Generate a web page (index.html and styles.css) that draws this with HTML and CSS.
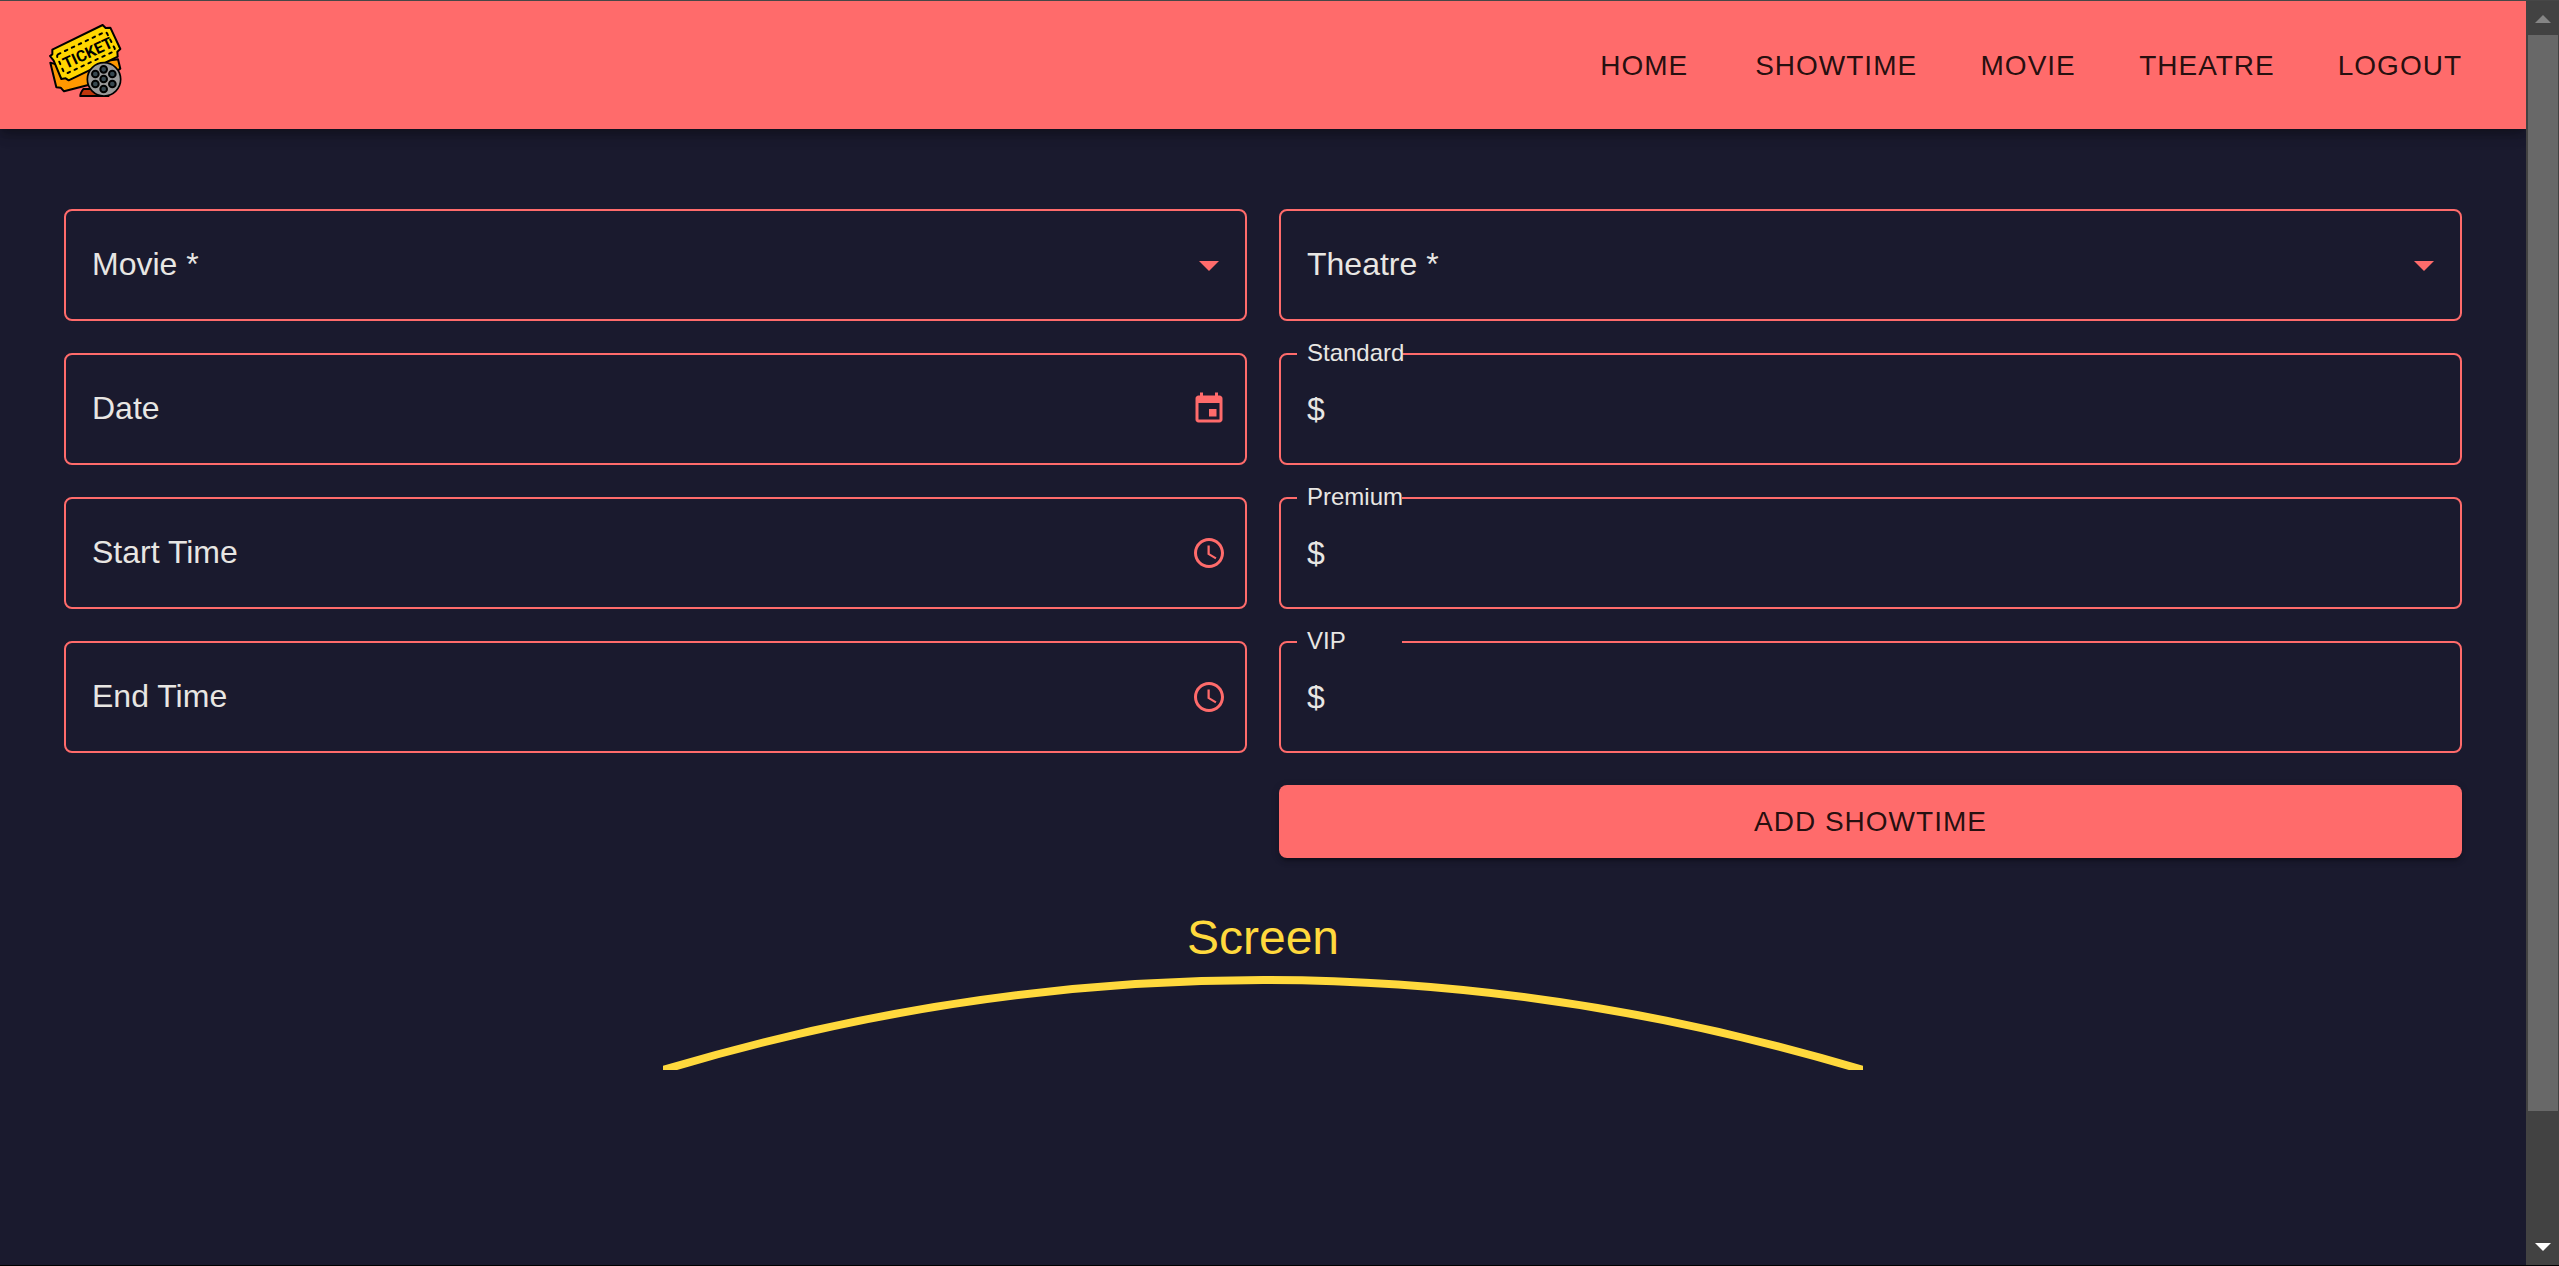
FILE: index.html
```html
<!DOCTYPE html>
<html lang="en">
<head>
  <meta charset="utf-8">
  <meta name="viewport" content="width=device-width, initial-scale=1">
  <title>Add Showtime</title>
  <link rel="stylesheet" href="styles.css">
</head>
<body>
  <div class="page">
    <header class="app-bar">
      <a class="logo" href="#" aria-label="Ticket home">
        <svg class="logo-art" viewBox="144 72 222 222" aria-hidden="true">
          <path d="M151 188 L169 262 L182 263 L192 274 L300 246 L361 206 L354 178 L190 200 Z" fill="#ff9800" stroke="#000" stroke-width="6" stroke-linejoin="round"/>
          <path d="M157 149 L308 75 L317 84 L331 83 L361 147 L352 155 L353 170 L206 241 L197 235 L184 237 L161 182 L150 168 L157 163 Z" fill="#ffd600" stroke="#000" stroke-width="6" stroke-linejoin="round"/>
          <path d="M174 163 L312 97 Q320 95 323 104 L344 145 Q345 153 338 156 L203 219 Q194 222 190 213 L172 172 Q170 166 174 163 Z" fill="none" stroke="#000" stroke-width="6" stroke-linecap="round" stroke-dasharray="8 15"/>
          <text class="logo-text" x="198" y="207" transform="rotate(-25 198 207)">TICKET</text>
          <path d="M241 288 Q240 281 250 267 L280 267 L315 288 Z" fill="#bf360c" stroke="#000" stroke-width="6" stroke-linejoin="round"/>
          <path d="M241 288 H328" stroke="#000" stroke-width="6"/>
          <circle cx="312" cy="238" r="50" fill="#9a9a9a" stroke="#000" stroke-width="5"/>
          <g fill="#37474f" stroke="#000" stroke-width="6">
            <circle cx="311" cy="237" r="10"/>
            <circle cx="311" cy="208" r="10"/>
            <circle cx="337" cy="222" r="10"/>
            <circle cx="337" cy="252" r="10"/>
            <circle cx="311" cy="267" r="10"/>
            <circle cx="286" cy="252" r="10"/>
            <circle cx="286" cy="222" r="10"/>
          </g>
        </svg>
      </a>
      <nav class="nav">
        <a class="nav-link" href="#">HOME</a>
        <a class="nav-link" href="#">SHOWTIME</a>
        <a class="nav-link" href="#">MOVIE</a>
        <a class="nav-link" href="#">THEATRE</a>
        <a class="nav-link" href="#">LOGOUT</a>
      </nav>
    </header>

    <main class="content">
      <form class="showtime-form">
        <div class="field">
          <label class="field-label" for="movie">Movie *</label>
          <select class="field-control" id="movie"><option value=""></option></select>
          <svg class="field-arrow" viewBox="0 0 24 24" aria-hidden="true"><path d="M7 10l5 5 5-5z"/></svg>
        </div>

        <div class="field">
          <label class="field-label" for="theatre">Theatre *</label>
          <select class="field-control" id="theatre"><option value=""></option></select>
          <svg class="field-arrow" viewBox="0 0 24 24" aria-hidden="true"><path d="M7 10l5 5 5-5z"/></svg>
        </div>

        <div class="field">
          <label class="field-label" for="date">Date</label>
          <input class="field-control" id="date" type="text">
          <button class="field-button" type="button" aria-label="Choose date">
            <svg class="field-icon" viewBox="0 0 24 24" aria-hidden="true"><path d="M17 12h-5v5h5v-5zM16 1v2H8V1H6v2H5c-1.11 0-1.99.9-1.99 2L3 19c0 1.1.89 2 2 2h14c1.1 0 2-.9 2-2V5c0-1.1-.9-2-2-2h-1V1h-2zm3 18H5V8h14v11z"/></svg>
          </button>
        </div>

        <fieldset class="field price">
          <legend class="notch"><label for="standard">Standard</label></legend>
          <div class="price-row">
            <span>$</span>
            <input class="price-input" id="standard" type="text" inputmode="decimal">
          </div>
        </fieldset>

        <div class="field">
          <label class="field-label" for="start">Start Time</label>
          <input class="field-control" id="start" type="text">
          <button class="field-button" type="button" aria-label="Choose start time">
            <svg class="field-icon" viewBox="0 0 24 24" aria-hidden="true"><path d="M11.99 2C6.47 2 2 6.48 2 12s4.47 10 9.99 10C17.52 22 22 17.52 22 12S17.52 2 11.99 2zM12 20c-4.42 0-8-3.58-8-8s3.58-8 8-8 8 3.58 8 8-3.58 8-8 8z"/><path d="M12.5 7H11v6l5.25 3.15.75-1.23-4.5-2.67z"/></svg>
          </button>
        </div>

        <fieldset class="field price">
          <legend class="notch"><label for="premium">Premium</label></legend>
          <div class="price-row">
            <span>$</span>
            <input class="price-input" id="premium" type="text" inputmode="decimal">
          </div>
        </fieldset>

        <div class="field">
          <label class="field-label" for="end">End Time</label>
          <input class="field-control" id="end" type="text">
          <button class="field-button" type="button" aria-label="Choose end time">
            <svg class="field-icon" viewBox="0 0 24 24" aria-hidden="true"><path d="M11.99 2C6.47 2 2 6.48 2 12s4.47 10 9.99 10C17.52 22 22 17.52 22 12S17.52 2 11.99 2zM12 20c-4.42 0-8-3.58-8-8s3.58-8 8-8 8 3.58 8 8-3.58 8-8 8z"/><path d="M12.5 7H11v6l5.25 3.15.75-1.23-4.5-2.67z"/></svg>
          </button>
        </div>

        <fieldset class="field price">
          <legend class="notch"><label for="vip">VIP</label></legend>
          <div class="price-row">
            <span>$</span>
            <input class="price-input" id="vip" type="text" inputmode="decimal">
          </div>
        </fieldset>

        <button class="submit" type="submit">ADD SHOWTIME</button>
      </form>

      <section class="screen">
        <h2 class="screen-title">Screen</h2>
        <svg class="screen-curve" viewBox="0 0 1200 98" aria-hidden="true">
          <path d="M0 98 Q600 -82 1200 98" fill="none" stroke="#ffd93d" stroke-width="8"/>
        </svg>
      </section>
    </main>
  </div>

  <div class="scrollbar" aria-hidden="true">
    <svg class="scroll-arrow" viewBox="0 0 33 34"><path d="M9 22 L17 14 L25 22 Z" fill="#858585"/></svg>
    <div class="scroll-track"><div class="scroll-thumb"></div></div>
    <svg class="scroll-arrow" viewBox="0 0 33 34"><path d="M9 12 L17 20 L25 12 Z" fill="#fff"/></svg>
  </div>
</body>
</html>
```
FILE: styles.css
```css
:root {
  --coral: #ff6b6b;
  --navy: #1a1a2e;
  --text: #e8e6e3;
  --yellow: #ffd93d;
  --ink: rgba(0, 0, 0, 0.87);
}

* {
  box-sizing: border-box;
}

body {
  margin: 0;
  min-height: 100vh;
  display: grid;
  grid-template-columns: minmax(0, 1fr) 33px;
  border-top: 1px solid #474747;
  border-bottom: 1px solid #000;
  background: var(--navy);
  color: var(--text);
  font-family: "Liberation Sans", Arial, sans-serif;
  font-size: 32px;
}

/* App bar */
.app-bar {
  display: flex;
  align-items: center;
  justify-content: space-between;
  min-height: 128px;
  padding: 0 48px;
  background: var(--coral);
  box-shadow: 0 4px 8px -2px rgba(0, 0, 0, 0.2), 0 8px 10px rgba(0, 0, 0, 0.14), 0 2px 20px rgba(0, 0, 0, 0.12);
}

.logo {
  padding-bottom: 8px;
}

.logo-art {
  display: block;
  width: 74px;
  height: 74px;
}

.logo-text {
  font-family: Roboto, sans-serif;
  font-size: 47px;
  font-weight: 700;
}

.nav {
  display: flex;
  gap: 31px;
}

.nav-link {
  min-width: 128px;
  padding: 13px 16px 11px;
  color: var(--ink);
  font-size: 28px;
  line-height: 48px;
  letter-spacing: 1px;
  text-align: center;
  text-decoration: none;
}

/* Form */
.content {
  padding: 80px 64px;
}

.showtime-form {
  display: grid;
  grid-template-columns: repeat(2, minmax(0, 1fr));
  gap: 32px;
}

.field {
  display: grid;
  grid-template-columns: minmax(0, 1fr) 48px;
  align-items: center;
  min-width: 0;
  height: 112px;
  margin: 0;
  padding: 0 12px 0 26px;
  border: 2px solid var(--coral);
  border-radius: 8px;
}

.field-label,
.field-control {
  grid-area: 1 / 1;
}

.field-label {
  line-height: 46px;
  padding-bottom: 2px;
  pointer-events: none;
}

.field-control,
.price-input {
  width: 100%;
  height: 46px;
  padding: 0;
  border: 0;
  outline: 0;
  appearance: none;
  background: transparent;
  color: inherit;
  font: inherit;
}

.field-arrow {
  width: 48px;
  height: 48px;
  fill: var(--coral);
  pointer-events: none;
}

.field-button {
  display: grid;
  place-items: center;
  width: 48px;
  height: 48px;
  padding: 0;
  border: 0;
  background: transparent;
}

.field-icon {
  width: 36px;
  height: 36px;
  fill: var(--coral);
}

.price {
  display: block;
  padding: 0 16px;
}

/* The legend opens the gap in the top border; its text overflows it. */
.notch {
  display: flex;
  align-items: center;
  width: 105px;
  height: 2px;
  padding: 0 10px 2px;
  font-size: 24px;
  line-height: 24px;
}

.price-row {
  display: flex;
  align-items: center;
  gap: 16px;
  height: 108px;
  padding: 0 10px;
}

.submit {
  grid-column: 2;
  padding: 12px 32px;
  border: 0;
  border-radius: 8px;
  background: var(--coral);
  box-shadow: 0 6px 2px -4px rgba(0, 0, 0, 0.2), 0 4px 4px rgba(0, 0, 0, 0.14), 0 2px 10px rgba(0, 0, 0, 0.12);
  color: var(--ink);
  font: inherit;
  font-size: 28px;
  line-height: 49px;
  letter-spacing: 1px;
}

/* Screen */
.screen {
  display: flex;
  flex-direction: column;
  align-items: center;
  padding-top: 46px;
}

.screen-title {
  margin: 0;
  color: var(--yellow);
  font-size: 48px;
  font-weight: 400;
  line-height: 68px;
}

.screen-curve {
  display: block;
  width: 100%;
  max-width: 1200px;
}

/* Scrollbar */
.scrollbar {
  display: flex;
  flex-direction: column;
  position: relative;
  background: #424242;
}

.scroll-arrow {
  display: block;
  width: 33px;
  height: 34px;
}

.scroll-track {
  flex: 1;
  padding: 0 1px 0 2px;
}

.scroll-thumb {
  height: 90%;
  background: #686868;
}
```
